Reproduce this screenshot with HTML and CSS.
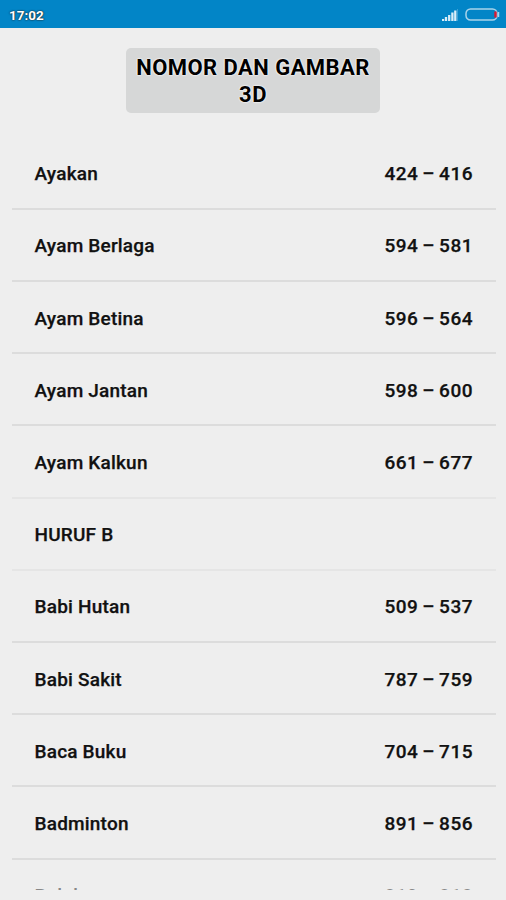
FILE: index.html
```html
<!DOCTYPE html>
<html lang="id"><head><meta charset="utf-8"><title>Nomor dan Gambar 3D</title><link rel="stylesheet" href="styles.css"></head>
<body>
<header class="status"><span class="clock">17:02</span>
<svg class="signal" width="16" height="12" viewBox="0 0 16 12"><path d="M1 10v2M4 8v4M7.2 6v6M10.4 3.5v8.5M13.3 1.5v10.5" stroke="#d9edf8" stroke-width="2.3"/><path d="M15.7 0v12" stroke="#4da8d7" stroke-width="1"/></svg>
<svg class="battery" width="35" height="13" viewBox="0 0 35 13"><rect x="1" y="1" width="31" height="11" rx="4.5" fill="none" stroke="#a9d3ea" stroke-width="1.5"/><path d="M33.5 4v5" stroke="#a9d3ea" stroke-width="1.5"/><path d="M30.5 3.5v6" stroke="#dc1832" stroke-width="2.4"/></svg>
</header>
<button class="title">NOMOR DAN GAMBAR<br>3D</button>
<main class="list">
<div class="row"><span>Ayakan</span><span class="num">424 – 416</span></div>
<div class="row"><span>Ayam Berlaga</span><span class="num">594 – 581</span></div>
<div class="row"><span>Ayam Betina</span><span class="num">596 – 564</span></div>
<div class="row"><span>Ayam Jantan</span><span class="num">598 – 600</span></div>
<div class="row faint"><span>Ayam Kalkun</span><span class="num">661 – 677</span></div>
<div class="row faint"><span>HURUF B</span></div>
<div class="row"><span>Babi Hutan</span><span class="num">509 – 537</span></div>
<div class="row"><span>Babi Sakit</span><span class="num">787 – 759</span></div>
<div class="row"><span>Baca Buku</span><span class="num">704 – 715</span></div>
<div class="row"><span>Badminton</span><span class="num">891 – 856</span></div>
<div class="row last"><span>Balok</span><span class="num">819 – 818</span></div>
</main>
</body></html>
```
FILE: styles.css
```css
* { box-sizing: border-box; }
body { margin: 0; height: 900px; overflow: hidden; background: #eee; color: #111; font-family: Roboto, sans-serif; }
.status { height: 28px; background: #0285c7; display: flex; align-items: center; padding: 1px 7px 0 9px; }
.clock { flex: 1; color: #fff; font-size: 13.5px; font-weight: 700; text-shadow: 0 0 2px #222, 0 0 1px #222; }
.signal { margin-right: 7px; }
.battery { margin-right: -1px; }
.title { display: block; width: 254px; height: 65px; margin: 20px 0 0 126px; padding: 0; border: 0; border-radius: 5px; background: #d6d7d7; color: #000; font: 700 22px/27px Roboto, sans-serif; letter-spacing: .45px; text-shadow: 0 0 2px #fff, 0 0 2px #fff; }
.list { height: 752px; margin: 24.5px 10px 0 12px; overflow: hidden; }
.row { height: 72.22px; border-bottom: 2px solid #dcdcdc; padding: 2px 23px 0 22.5px; display: flex; align-items: center; justify-content: space-between; font-size: 19px; font-weight: 500; letter-spacing: .2px; -webkit-text-stroke: .25px #111; }
.row.faint { border-bottom-color: #e5e5e5; }
.row.last { color: #888; -webkit-text-stroke: 0; }
.num { letter-spacing: .5px; word-spacing: -1.2px; }
```
